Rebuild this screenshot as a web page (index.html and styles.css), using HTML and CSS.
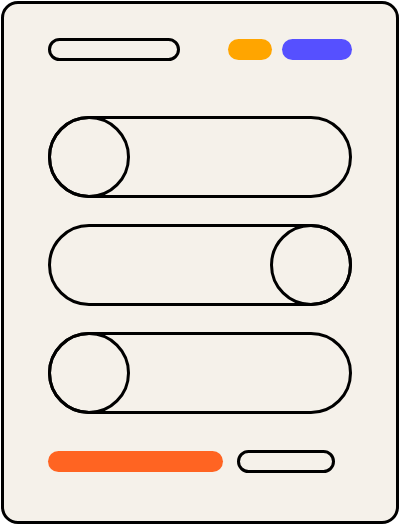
FILE: index.html
```html
<!DOCTYPE html>
<html>
<head>
<meta charset="utf-8">
<link rel="stylesheet" href="styles.css">
</head>
<body>
<div class="card">
  <div class="top-row">
    <div class="pill outline wide"></div>
    <div class="chips">
      <div class="pill amber"></div>
      <div class="pill violet"></div>
    </div>
  </div>
  <div class="toggles">
    <div class="track"><div class="knob"></div></div>
    <div class="track on"><div class="knob"></div></div>
    <div class="track"><div class="knob"></div></div>
  </div>
  <div class="bottom-row">
    <div class="pill orange"></div>
    <div class="pill outline small"></div>
  </div>
</div>
</body>
</html>
```
FILE: styles.css
```css
html, body {
  margin: 0;
  padding: 0;
  background: #ffffff;
  font-family: "Liberation Sans", Arial, sans-serif;
}
.card {
  box-sizing: border-box;
  margin: 1px 1px 0 1px;
  width: 398px;
  height: 523px;
  border: 3px solid #000;
  border-radius: 17px;
  background: #f5f1ea;
  padding: 34px 44px 0 44px;
}
.top-row {
  display: flex;
  justify-content: space-between;
  align-items: center;
  height: 23px;
}
.chips {
  display: flex;
  gap: 10px;
  align-items: center;
}
.pill {
  box-sizing: border-box;
  border-radius: 12px;
}
.outline {
  border: 3px solid #000;
  background: #f5f1ea;
  height: 23px;
}
.wide { width: 132px; }
.small { width: 98px; }
.amber {
  width: 44px;
  height: 21px;
  background: #ffa500;
}
.violet {
  width: 70px;
  height: 21px;
  background: #5650ff;
}
.orange {
  width: 175px;
  height: 21px;
  background: #ff6422;
}
.toggles {
  margin-top: 55px;
  display: flex;
  flex-direction: column;
  gap: 26px;
}
.track {
  box-sizing: border-box;
  height: 82px;
  border: 3px solid #000;
  border-radius: 41px;
  display: flex;
}
.knob {
  box-sizing: border-box;
  width: 82px;
  height: 82px;
  margin: -3px;
  border: 3px solid #000;
  border-radius: 50%;
  flex: none;
}
.track.on .knob {
  margin-left: auto;
}
.bottom-row {
  margin-top: 36px;
  display: flex;
  align-items: center;
  gap: 14px;
}
```
